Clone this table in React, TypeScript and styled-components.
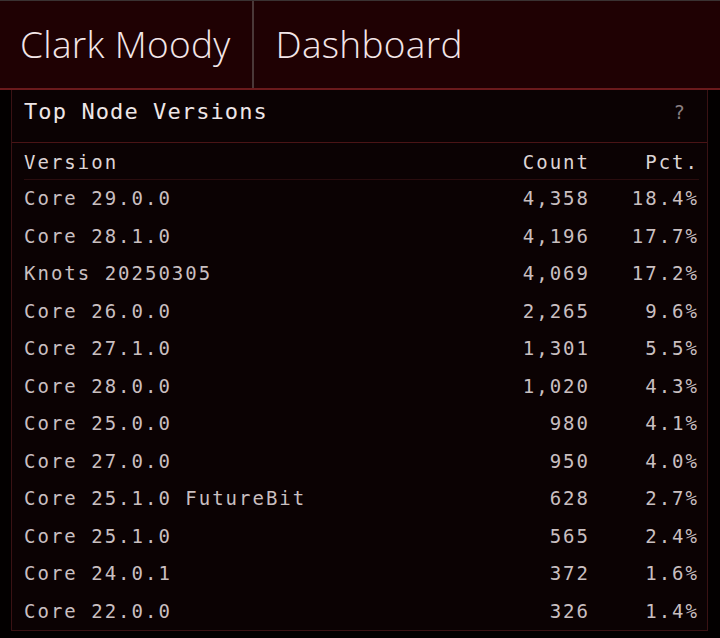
import styled, { createGlobalStyle } from "styled-components";

const GlobalStyle = createGlobalStyle`
  html, body {
    margin: 0;
    padding: 0;
    background: #030000;
  }
`;

const Page = styled.div`
  width: 720px;
  height: 638px;
  overflow: hidden;
  background: #030000;
`;

const TopBar = styled.header`
  height: 87px;
  display: flex;
  align-items: stretch;
  background: #1f0103;
  border-top: 1px solid #3a3232;
  border-bottom: 2px solid #6a1a1c;
`;

const BrandCell = styled.div<{ $divider?: boolean }>`
  display: flex;
  align-items: center;
  padding: 0 21px 3px ${(p) => (p.$divider ? "20px" : "22px")};
  border-right: ${(p) => (p.$divider ? "2px solid #4a3838" : "none")};
  font-family: "Open Sans", Lato, sans-serif;
  font-weight: 300;
  font-size: 37px;
  color: #f3e6e8;
  letter-spacing: 0.3px;
`;

const Panel = styled.section`
  margin: 0 12px 0 11px;
  background: #0b0203;
  border-left: 1px solid #3a1214;
  border-right: 1px solid #3a1214;
  border-bottom: 1px solid #3a1214;
  font-family: "DejaVu Sans Mono", "Liberation Mono", monospace;
`;

const PanelHead = styled.div`
  height: 53px;
  box-sizing: border-box;
  display: flex;
  align-items: center;
  justify-content: space-between;
  padding: 0 22px 9px 12px;
  border-bottom: 1px solid #4a1416;
`;

const Title = styled.h2`
  margin: 0;
  font-size: 22px;
  font-weight: 400;
  letter-spacing: 1.1px;
  color: #eee6e7;
`;

const Help = styled.span`
  font-size: 19px;
  color: #8a7f80;
`;

const Table = styled.div`
  padding: 0 10px 0 12px;
  display: grid;
  grid-template-columns: 1fr 130px 109px;
`;

const Cell = styled.div<{ $right?: boolean; $head?: boolean }>`
  height: ${(p) => (p.$head ? "36px" : "37.5px")};
  line-height: ${(p) => (p.$head ? "38px" : "37.5px")};
  font-size: 19px;
  letter-spacing: 2px;
  color: ${(p) => (p.$head ? "#ddd4d5" : "#c9bfc0")};
  text-align: ${(p) => (p.$right ? "right" : "left")};
  white-space: nowrap;
  border-bottom: ${(p) => (p.$head ? "1px solid #2a0c0e" : "none")};
  margin-right: ${(p) => (p.$right ? "-2px" : "0")};
`;

const rows: [string, string, string][] = [
  ["Core 29.0.0", "4,358", "18.4%"],
  ["Core 28.1.0", "4,196", "17.7%"],
  ["Knots 20250305", "4,069", "17.2%"],
  ["Core 26.0.0", "2,265", "9.6%"],
  ["Core 27.1.0", "1,301", "5.5%"],
  ["Core 28.0.0", "1,020", "4.3%"],
  ["Core 25.0.0", "980", "4.1%"],
  ["Core 27.0.0", "950", "4.0%"],
  ["Core 25.1.0 FutureBit", "628", "2.7%"],
  ["Core 25.1.0", "565", "2.4%"],
  ["Core 24.0.1", "372", "1.6%"],
  ["Core 22.0.0", "326", "1.4%"],
];

const App = () => {
  return (
    <Page>
      <GlobalStyle />
      <TopBar>
        <BrandCell $divider>Clark Moody</BrandCell>
        <BrandCell>Dashboard</BrandCell>
      </TopBar>
      <Panel>
        <PanelHead>
          <Title>Top Node Versions</Title>
          <Help>?</Help>
        </PanelHead>
        <Table>
          <Cell $head>Version</Cell>
          <Cell $head $right>Count</Cell>
          <Cell $head $right>Pct.</Cell>
          {rows.map(([v, c, p]) => (
            <>
              <Cell key={v + "v"}>{v}</Cell>
              <Cell key={v + "c"} $right>{c}</Cell>
              <Cell key={v + "p"} $right>{p}</Cell>
            </>
          ))}
        </Table>
      </Panel>
    </Page>
  );
};

export default App;
